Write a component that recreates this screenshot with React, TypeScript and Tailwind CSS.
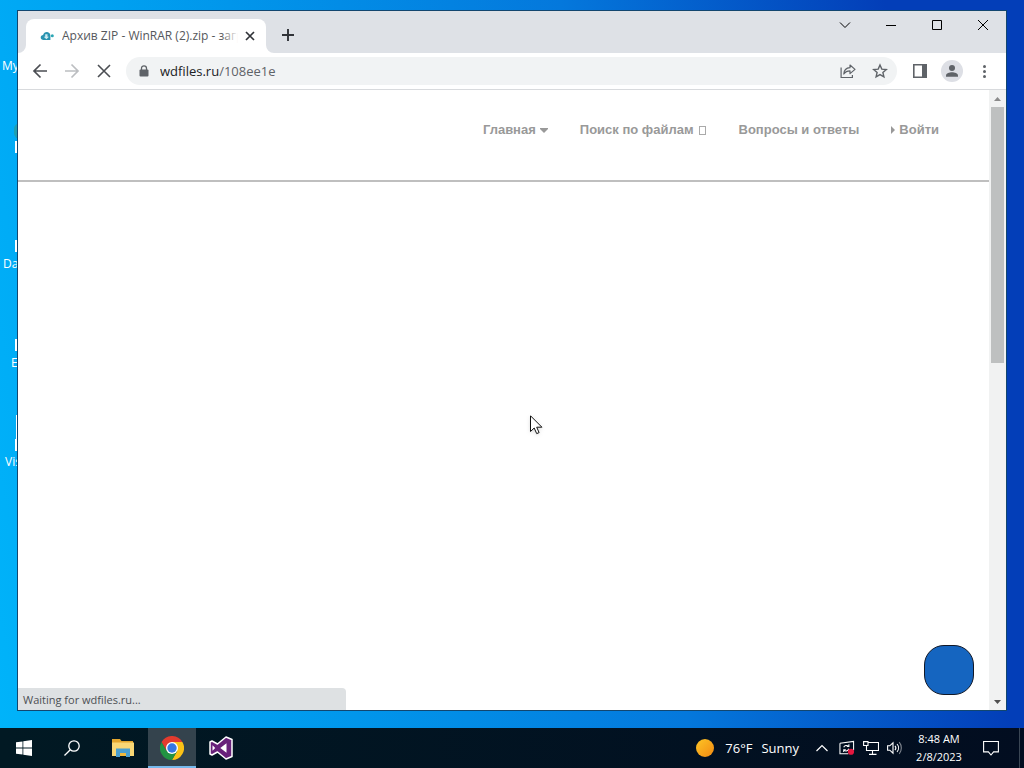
import { useState } from 'react';
import type { ReactNode } from 'react';

const navLinks = [
  { label: 'Главная', after: 'down' },
  { label: 'Поиск по файлам', after: 'box' },
  { label: 'Вопросы и ответы' },
  { label: 'Войти', before: 'right' },
];

function IconButton({ label, className = '', children }: { label: string; className?: string; children: ReactNode }) {
  return (
    <button type="button" aria-label={label} className={`flex shrink-0 items-center justify-center ${className}`}>
      {children}
    </button>
  );
}

// Icons on the desktop, mostly hidden behind the browser window
function DesktopIcons() {
  return (
    <div className="absolute inset-y-0 left-0 text-[12px] leading-4 whitespace-nowrap text-white">
      <span className="absolute top-[58px] left-[2px]">My</span>
      <div className="absolute top-[123px] left-[14px] h-4 w-3 rounded-full bg-[#1f9fb0]" />
      <div className="absolute top-[141px] left-[15px] h-3 w-3 bg-white" />
      <div className="absolute top-[240px] left-[15px] h-3 w-3 bg-white" />
      <span className="absolute top-[256px] left-[3px]">Da</span>
      <div className="absolute top-[339px] left-[15px] h-3 w-3 bg-white" />
      <span className="absolute top-[355px] left-[11px]">E</span>
      <div className="absolute top-[415px] left-[16px] h-9 w-3 bg-white" />
      <div className="absolute top-[439px] left-[15px] h-3 w-3 bg-white" />
      <span className="absolute top-[454px] left-[5px]">Vis</span>
    </div>
  );
}

function TabStrip() {
  return (
    <div className="flex h-[42px] items-end bg-[#dee1e6]">
      <div className="relative ml-2 flex h-[34px] w-60 items-center rounded-t-lg bg-white pl-[14px]">
        <svg className="absolute bottom-0 -left-2 h-2 w-2 text-white" viewBox="0 0 8 8" fill="currentColor">
          <path d="M8 0v8H0a8 8 0 0 0 8-8z" />
        </svg>
        <svg className="absolute -right-2 bottom-0 h-2 w-2 text-white" viewBox="0 0 8 8" fill="currentColor">
          <path d="M0 0v8h8a8 8 0 0 1-8-8z" />
        </svg>
        <svg className="mr-2 h-[14px] w-[14px] shrink-0" viewBox="0 0 14 14">
          <path d="M3.500 11C1.800 11 .7 10 .7 8.500c0-1.400 1-2.300 2.400-2.400C3.600 4 5.300 2.900 7.200 3.100c2 .2 3.300 1.900 3.200 3.900v4z" fill="#2a93b0" />
          <path d="M5.200 5.200h2.300v2.500h1.500L6.400 10.200 3.700 7.700h1.500z" fill="#cfeaf0" />
          <circle cx="12.300" cy="6.800" r="1.500" fill="#2aa6b4" />
        </svg>
        <div className="relative mr-1 min-w-0 flex-1 overflow-hidden text-[12px] leading-4 whitespace-nowrap text-[#55585c]">
          Архив ZIP - WinRAR (2).zip - загр
          <div className="absolute inset-y-0 right-0 w-4 bg-linear-to-r from-transparent to-white" />
        </div>
        <IconButton label="Close tab" className="mr-2 h-4 w-4 text-[#303338]">
          <svg className="h-4 w-4" viewBox="0 0 16 16" fill="none" stroke="currentColor" strokeWidth="1.700">
            <path d="M4 4l8 8M12 4l-8 8" />
          </svg>
        </IconButton>
      </div>
      <IconButton label="New tab" className="mb-1 ml-2 h-7 w-7 text-[#303338]">
        <svg className="h-4 w-4" viewBox="0 0 16 16" fill="none" stroke="currentColor" strokeWidth="1.900">
          <path d="M8 2v12M2 8h12" />
        </svg>
      </IconButton>
      <div className="ml-auto flex self-start text-black">
        <IconButton label="Search tabs" className="h-7 w-[46px]">
          <svg className="h-3 w-3" viewBox="0 0 12 12" fill="none" stroke="currentColor" strokeWidth="1">
            <path d="M1 3.500l5 5 5-5" />
          </svg>
        </IconButton>
        <IconButton label="Minimize" className="h-7 w-[46px]">
          <svg className="h-3 w-3" viewBox="0 0 12 12" fill="none" stroke="currentColor">
            <path d="M1 6.500h10" />
          </svg>
        </IconButton>
        <IconButton label="Maximize" className="h-7 w-[46px]">
          <svg className="h-3 w-3" viewBox="0 0 12 12" fill="none" stroke="currentColor">
            <path d="M1.500 1.500h9v9h-9z" />
          </svg>
        </IconButton>
        <IconButton label="Close" className="h-7 w-[46px]">
          <svg className="h-3 w-3" viewBox="0 0 12 12" fill="none" stroke="currentColor" strokeWidth="1">
            <path d="M1 1l10 10M11 1L1 11" />
          </svg>
        </IconButton>
      </div>
    </div>
  );
}

function Toolbar() {
  const [url, setUrl] = useState('wdfiles.ru/108ee1e');
  const slash = url.indexOf('/') < 0 ? url.length : url.indexOf('/');

  return (
    <div className="flex h-[37px] items-center border-b border-[#d8dadd] bg-white px-[6px] text-[#5f6368]">
      <IconButton label="Back" className="h-8 w-8 text-[#4b4e53]">
        <svg className="h-4 w-4" viewBox="0 0 16 16" fill="none" stroke="currentColor" strokeWidth="1.700">
          <path d="M15 8H2.500M8.500 1.500L2 8l6.500 6.500" />
        </svg>
      </IconButton>
      <IconButton label="Forward" className="h-8 w-8 text-[#bcbec1]">
        <svg className="h-4 w-4" viewBox="0 0 16 16" fill="none" stroke="currentColor" strokeWidth="1.700">
          <path d="M1 8h12.500M7.500 1.500L14 8l-6.500 6.500" />
        </svg>
      </IconButton>
      <IconButton label="Stop" className="h-8 w-8 text-[#4b4e53]">
        <svg className="h-4 w-4" viewBox="0 0 16 16" fill="none" stroke="currentColor" strokeWidth="1.600">
          <path d="M2 2l12 12M14 2L2 14" />
        </svg>
      </IconButton>
      <div className="ml-[6px] flex h-7 min-w-0 flex-1 items-center rounded-full bg-[#f1f3f4] pr-px pl-[13px]">
        <svg className="mr-[11px] h-3 w-[10px] shrink-0" viewBox="0 0 10 12">
          <path d="M2.500 5V3.300a2.500 2.500 0 0 1 5 0V5" fill="none" stroke="currentColor" strokeWidth="1.300" />
          <rect x=".5" y="4.500" width="9" height="7" rx="1" fill="currentColor" />
        </svg>
        <div className="relative min-w-0 flex-1 text-[13px] leading-5">
          <div aria-hidden="true" className="pointer-events-none absolute inset-0 truncate">
            <span className="text-[#202124]">{url.slice(0, slash)}</span>
            {url.slice(slash)}
          </div>
          <input
            aria-label="Address bar"
            value={url}
            onChange={(e) => setUrl(e.target.value)}
            className="block w-full bg-transparent text-transparent caret-black outline-none"
          />
        </div>
        <IconButton label="Share" className="h-8 w-8">
          <svg className="h-4 w-4" viewBox="0 0 16 16" fill="none" stroke="currentColor" strokeWidth="1.200">
            <path d="M1.100 4.500v10h11.300V12" />
            <path d="M3.800 11c.2-4 2.500-6 6.200-6.300V2l5 4.400-5 4.200V7.800c-2.800 0-4.800 1-6.200 3.200z" strokeLinejoin="round" />
          </svg>
        </IconButton>
        <IconButton label="Bookmark" className="h-8 w-8">
          <svg className="h-4 w-4" viewBox="0 0 16 16" fill="none" stroke="currentColor" strokeWidth="1.400">
            <path d="M8 2l1.800 4.100 4.500.4-3.400 3 1 4.400L8 11.600l-3.900 2.300 1-4.400-3.400-3 4.500-.4z" />
          </svg>
        </IconButton>
      </div>
      <IconButton label="Side panel" className="ml-[7px] h-8 w-8">
        <svg className="h-[14px] w-[14px]" viewBox="0 0 14 14">
          <path d="M.8.8h12.400v12.400H.8z" fill="none" stroke="currentColor" strokeWidth="1.600" />
          <path d="M9 1h4v12H9z" fill="currentColor" />
        </svg>
      </IconButton>
      <IconButton label="Profile" className="h-8 w-8">
        <svg className="h-[22px] w-[22px]" viewBox="0 0 22 22">
          <circle cx="11" cy="11" r="11" fill="#dddfe5" />
          <circle cx="11" cy="8" r="3" fill="currentColor" />
          <path d="M5 16.800v-1.300c0-2 3.500-3.200 6-3.200s6 1.200 6 3.200v1.300z" fill="currentColor" />
        </svg>
      </IconButton>
      <IconButton label="Menu" className="h-8 w-8">
        <svg className="h-4 w-4" viewBox="0 0 16 16" fill="currentColor">
          <circle cx="8.500" cy="3.500" r="1.500" />
          <circle cx="8.500" cy="8.500" r="1.500" />
          <circle cx="8.500" cy="13.500" r="1.500" />
        </svg>
      </IconButton>
    </div>
  );
}

function SiteHeader() {
  return (
    <header className="flex h-[92px] justify-end border-b-2 border-[#bfbfbf] pt-[31px] pr-[50px]">
      <nav className="flex gap-8 font-['Liberation_Sans',Arial,sans-serif] text-[13px] leading-[18px] font-bold text-[#999]">
        {navLinks.map((link) => (
          <a key={link.label} href="#" className="flex items-center gap-1 self-start whitespace-nowrap">
            {link.before === 'right' && (
              <svg className="h-2 w-1" viewBox="0 0 4 8" fill="currentColor">
                <path d="M0 0l4 4-4 4z" />
              </svg>
            )}
            {link.label}
            {link.after === 'down' && (
              <svg className="h-[5px] w-2" viewBox="0 0 8 5" fill="currentColor">
                <path d="M0 0h8v1L4 5 0 1z" />
              </svg>
            )}
            {link.after === 'box' && <span className="mx-px h-[9px] w-[7px] border border-[#aaa]" />}
          </a>
        ))}
      </nav>
    </header>
  );
}

function Scrollbar() {
  return (
    <div className="flex w-[17px] shrink-0 flex-col bg-[#f1f2f2]">
      <IconButton label="Scroll up" className="h-[17px] w-full text-[#8b8b8b]">
        <svg className="h-1 w-[7px]" viewBox="0 0 7 4" fill="currentColor">
          <path d="M0 4h7L3.500 0z" />
        </svg>
      </IconButton>
      <div className="flex flex-1 flex-col px-[2px]">
        <div className="h-7/16 bg-[#bec0c0]" />
      </div>
      <IconButton label="Scroll down" className="h-[17px] w-full text-[#505050]">
        <svg className="h-1 w-[7px]" viewBox="0 0 7 4" fill="currentColor">
          <path d="M0 0h7L3.500 4z" />
        </svg>
      </IconButton>
    </div>
  );
}

function BrowserWindow() {
  return (
    <section className="relative mx-[17px] mt-[10px] mb-[17px] flex flex-1 flex-col border border-[#12466f] bg-white">
      <TabStrip />
      <Toolbar />
      <div className="flex flex-1">
        <main className="relative min-w-0 flex-1">
          <SiteHeader />
          <button
            type="button"
            aria-label="Open chat"
            className="absolute right-[15px] bottom-[15px] h-[50px] w-[50px] rounded-[20px] border border-[#111827] bg-[#1565c0]"
          />
          <div className="absolute bottom-0 left-0 h-[22px] w-[328px] rounded-tr bg-[#dee1e3] pl-[5px] text-[11px] leading-6 text-[#4c4f53]">
            Waiting for wdfiles.ru...
          </div>
        </main>
        <Scrollbar />
      </div>
    </section>
  );
}

function Taskbar() {
  return (
    <footer className="flex h-10 items-center bg-linear-to-r from-[#011923] to-[#020d20] text-white">
      <IconButton label="Start" className="h-10 w-12">
        <svg className="h-4 w-4" viewBox="0 0 16 16" fill="currentColor">
          <path d="M0 2.300l6.500-.9v6.200H0zM7.300 1.300L16 0v7.600H7.300zM0 8.400h6.500v6.200L0 13.700zM7.300 8.400H16V16l-8.700-1.300z" />
        </svg>
      </IconButton>
      <IconButton label="Search" className="h-10 w-12">
        <svg className="h-4 w-4" viewBox="0 0 16 16" fill="none" stroke="currentColor" strokeWidth="1.300">
          <circle cx="10" cy="6" r="5.200" />
          <path d="M6.300 9.700L.5 15.500" />
        </svg>
      </IconButton>
      <IconButton label="File Explorer" className="h-10 w-[52px] pl-[2px]">
        <svg className="h-[18px] w-[22px]" viewBox="0 0 22 18">
          <path d="M0 0h8l1.500 2H21v4H0z" fill="#e3a62e" />
          <path d="M0 3.500h22V17H0z" fill="#f9d775" />
          <path d="M4 18v-8.500h14V18h-4v-4H8v4z" fill="#4a9fd0" />
          <path d="M8 14h6v3H8z" fill="#f0b93d" />
        </svg>
      </IconButton>
      <IconButton label="Chrome" className="h-10 w-12 border-b-2 border-[#76b9ed] bg-[#34434d] pt-[2px]">
        <svg className="h-6 w-6" viewBox="0 0 24 24">
          <path d="M12 6h10.400A12 12 0 0 1 12 24l5.200-9z" fill="#fbc116" />
          <path d="M1.600 6A12 12 0 0 0 12 24l5.200-9L12 12 6.800 15z" fill="#229342" />
          <path d="M12 6h10.400A12 12 0 0 0 1.600 6l5.200 9z" fill="#e33b2e" />
          <circle cx="12" cy="12" r="6" fill="#fff" />
          <circle cx="12" cy="12" r="4.700" fill="#3577e2" />
        </svg>
      </IconButton>
      <IconButton label="Visual Studio" className="h-10 w-[50px]">
        <svg className="h-6 w-6" viewBox="0 0 24 24" strokeLinejoin="round">
          <path
            d="M17 1l6 2.500v17L17 23l-8.500-7L3 19l-2-1V6l2-1 5.500 3z"
            fill="#68217a"
            stroke="#fff"
            strokeWidth="1.500"
          />
          <path d="M17.500 7.200L11.300 12l6.200 4.800zM3.500 9.200v5.600L6.200 12z" fill="#fff" />
        </svg>
      </IconButton>

      <div className="ml-auto flex h-full items-center">
        <div className="flex items-center text-[13px] leading-5">
          <svg className="mr-[11px] h-[18px] w-[18px]" viewBox="0 0 18 18">
            <defs>
              <linearGradient id="sun" x1="0" y1="0" x2="1" y2="1">
                <stop offset="0" stopColor="#fdc526" />
                <stop offset="1" stopColor="#f28a12" />
              </linearGradient>
            </defs>
            <circle cx="9" cy="9" r="9" fill="url(#sun)" />
          </svg>
          <span className="mr-[9px]">76°F</span>
          <span>Sunny</span>
        </div>
        <IconButton label="Show hidden icons" className="ml-[14px] h-10 w-[18px]">
          <svg className="h-3 w-3" viewBox="0 0 12 12" fill="none" stroke="currentColor" strokeWidth="1.200">
            <path d="M.5 9L6 3.500 11.500 9" />
          </svg>
        </IconButton>
        <IconButton label="Updates" className="h-10 w-6">
          <svg className="ml-2 h-4 w-[17px]" viewBox="0 0 17 16" fill="none" stroke="currentColor" strokeWidth="1.100">
            <path d="M1 3l14.500-2v9.500M1 3v11h9" />
            <path d="M5 7.200A3.200 3.200 0 0 1 10 6M10.500 4v2.400H8.200M10.500 8.800A3.200 3.200 0 0 1 5.500 10.500M5 12.300V9.900h2.300" />
            <circle cx="12.700" cy="12" r="3.300" fill="#e5173f" stroke="none" />
          </svg>
        </IconButton>
        <IconButton label="Network" className="h-10 w-6">
          <svg className="ml-2 h-[14px] w-4" viewBox="0 0 16 14" fill="none" stroke="currentColor" strokeWidth="1.100">
            <path d="M5 1.500h10.500v8h-12V5M9.500 9.500v4M6 13.400h7.500" />
            <path d="M.6.600h4.400v3.900H.6z" />
          </svg>
        </IconButton>
        <IconButton label="Volume" className="h-10 w-6">
          <svg className="ml-2 h-[14px] w-4" viewBox="0 0 16 14" fill="none" stroke="currentColor" strokeWidth="1.100">
            <path d="M.6 4.800h2.200L6 1.800v10.400l-3.200-3H.6z" />
            <path d="M8 4.800a3.500 3.500 0 0 1 0 4.400M10 3a6 6 0 0 1 0 8" />
            <path d="M12.200 1.200a9 9 0 0 1 0 11.600" opacity=".5" />
          </svg>
        </IconButton>
        <div className="ml-[7px] w-[58px] text-center text-[11px] leading-[18px] whitespace-nowrap">
          <div>8:48 AM</div>
          <div>2/8/2023</div>
        </div>
        <IconButton label="Notifications" className="h-10 w-[51px] pr-[5px]">
          <svg className="h-4 w-4" viewBox="0 0 16 16" fill="none" stroke="currentColor" strokeWidth="1.100">
            <path d="M.6 1.500h14.800v10.400h-4.800L8 15l-2.600-3.100H.6z" />
          </svg>
        </IconButton>
        <div className="mr-1 h-full w-px bg-[#3a4654]" />
      </div>
    </footer>
  );
}

export default function App() {
  return (
    <div className="relative flex min-h-screen flex-col bg-[linear-gradient(80deg,#00b4fa_0%,#00a0f0_22%,#0478dc_60%,#033eb8_88%)] font-['Open_Sans','Noto_Sans',sans-serif]">
      <DesktopIcons />
      <BrowserWindow />
      <Taskbar />
      <svg className="pointer-events-none absolute top-[415px] left-[530px] h-5 w-[13px] drop-shadow" viewBox="0 0 13 20">
        <path d="M.5.800v15.700l3.700-3.500 2.500 5.600 2.400-1-2.400-5.400h5.200z" fill="#fff" stroke="#111" />
      </svg>
    </div>
  );
}
